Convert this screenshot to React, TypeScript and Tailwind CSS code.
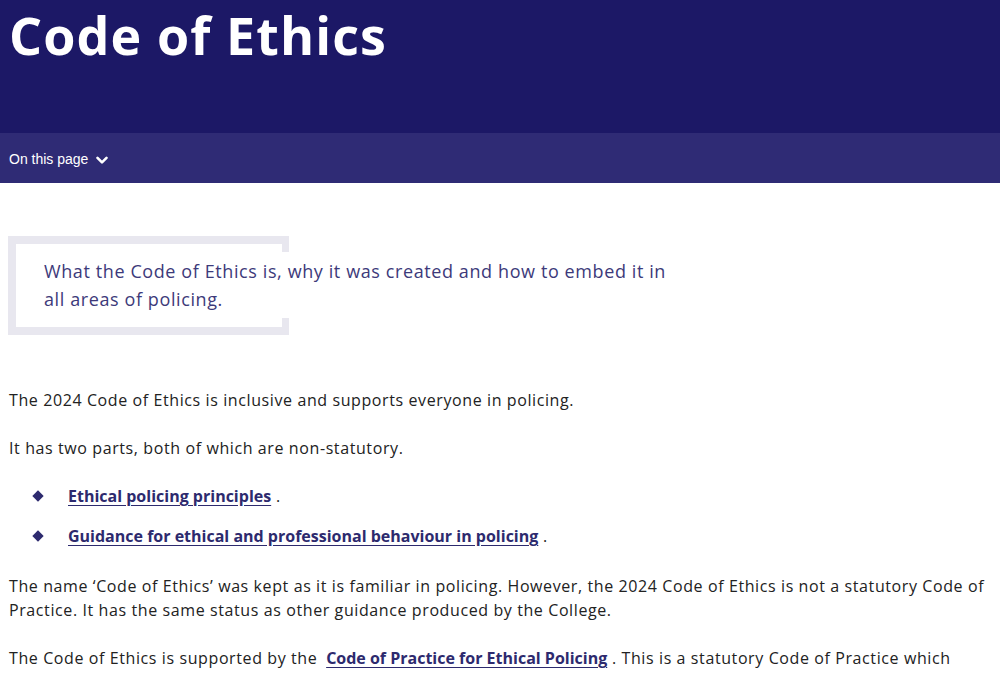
import React from "react";

function Chevron() {
  return (
    <svg width="12" height="9" viewBox="0 0 12 9" className="ml-[8px] mt-[1px]">
      <path d="M1.5 1.8 L6 6.3 L10.5 1.8" stroke="#ffffff" strokeWidth="2.6" fill="none" strokeLinecap="round" strokeLinejoin="round" />
    </svg>
  );
}

function Diamond() {
  return (
    <span className="inline-block w-[8px] h-[8px] bg-[#2d2a6e] rotate-45 shrink-0" />
  );
}

export default function App() {
  return (
    <div className="w-[1000px] h-[675px] bg-white overflow-hidden" style={{ fontFamily: '"Open Sans", "Liberation Sans", sans-serif' }}>
      <header className="bg-[#1c1866] h-[133px] px-[9px] pt-[1px]">
        <h1 className="text-white font-bold text-[52px] leading-[68px] tracking-[1.1px]">Code of Ethics</h1>
      </header>
      <nav className="bg-[#2f2b75] h-[50px] flex items-center px-[9px] pt-[3px]">
        <span className="text-white text-[14px]" style={{ fontFamily: '"Liberation Sans", Arial, sans-serif' }}>On this page</span>
        <Chevron />
      </nav>
      <main className="px-[9px] pt-[53px]">
        <div className="relative w-[700px]">
          <div className="absolute left-[-1px] top-0 w-[281px] h-[99px] border-l-[8px] border-t-[8px] border-b-[8px] border-[#e8e7ef]" />
          <div className="absolute left-[273px] top-0 w-[7px] h-[16px] bg-[#e8e7ef]" />
          <div className="absolute left-[273px] top-[82px] w-[7px] h-[17px] bg-[#e8e7ef]" />
          <p className="relative pl-[35px] pt-[21px] pb-[22px] text-[18px] leading-[28px] tracking-[0.6px] text-[#3d3a7a] w-[680px]">
            What the Code of Ethics is, why it was created and how to embed it in all areas of policing.
          </p>
        </div>
        <div className="text-[16px] leading-[24px] tracking-[0.6px] text-[#222222] pt-[53px] w-[982px]">
          <p>The 2024 Code of Ethics is inclusive and supports everyone in policing.</p>
          <p className="mt-[24px]">It has two parts, both of which are non-statutory.</p>
          <ul className="mt-[24px] pl-[25px] flex flex-col gap-[16px]">
            <li className="flex items-center gap-[26px]">
              <Diamond />
              <span>
                <a className="font-bold tracking-[0px] text-[#2d2a6e] underline underline-offset-[3px]">Ethical policing principles</a> .
              </span>
            </li>
            <li className="flex items-center gap-[26px]">
              <Diamond />
              <span>
                <a className="font-bold tracking-[0px] text-[#2d2a6e] underline underline-offset-[3px]">Guidance for ethical and professional behaviour in policing</a> .
              </span>
            </li>
          </ul>
          <p className="mt-[24px] pt-[2px]">
            The name ‘Code of Ethics’ was kept as it is familiar in policing. However, the 2024 Code of Ethics is not a statutory Code of Practice. It has the same status as other guidance produced by the College.
          </p>
          <p className="mt-[24px]">
            The Code of Ethics is supported by the{"  "}
            <a className="font-bold tracking-[0px] text-[#2d2a6e] underline underline-offset-[3px] ml-[4px]">Code of Practice for Ethical Policing</a> . This is a statutory Code of Practice which
          </p>
        </div>
      </main>
    </div>
  );
}
